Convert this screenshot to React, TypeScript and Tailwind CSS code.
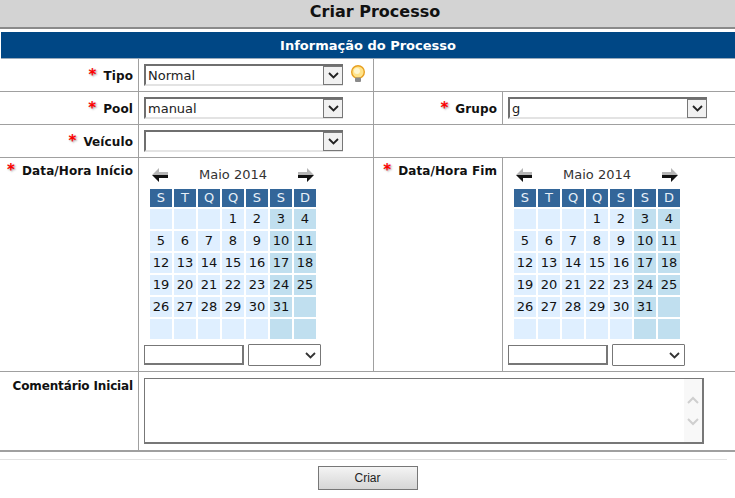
const font = "font-['DejaVu_Sans',Verdana,sans-serif]";

const HEADERS = ["S", "T", "Q", "Q", "S", "S", "D"];
const DAYS = [
  "", "", "", "1", "2", "3", "4",
  "5", "6", "7", "8", "9", "10", "11",
  "12", "13", "14", "15", "16", "17", "18",
  "19", "20", "21", "22", "23", "24", "25",
  "26", "27", "28", "29", "30", "31", "",
  "", "", "", "", "", "", "",
];

function Star() {
  return <span className="text-[#f00] text-[15px] leading-[14px] font-bold mr-[7px] [text-shadow:1px_1px_2px_#999]">*</span>;
}

function Label({ text, required = true }: { text: string; required?: boolean }) {
  return (
    <span className={`text-[12px] leading-[14px] font-bold text-[#111] whitespace-nowrap ${required ? "tracking-[0.1px]" : "tracking-[-0.15px]"}`}>
      {required && <Star />}
      {text}
    </span>
  );
}

function Chevron({ color = "#222" }: { color?: string }) {
  return (
    <svg width="11" height="7" viewBox="0 0 11 7" fill="none">
      <path d="M1 1l4.5 4.5L10 1" stroke={color} strokeWidth="1.8" />
    </svg>
  );
}

function Select({ value, width }: { value: string; width: string }) {
  return (
    <div className={`${width} h-[22px] flex items-center justify-between border-t-2 border-l-2 border-t-[#6f6f6f] border-l-[#6f6f6f] border-b-2 border-b-[#e3e3e3] pl-[2px] bg-white`}>
      <span className="text-[13px] text-[#222] leading-none">{value}</span>
      <div className="w-[20px] h-[19px] -mb-[1px] flex items-center justify-center border border-[#777] bg-[#f1f1f1]">
        <Chevron />
      </div>
    </div>
  );
}

function Arrow({ flip = false }: { flip?: boolean }) {
  return (
    <svg width="18" height="16" viewBox="0 0 18 16" className={flip ? "-scale-x-100" : ""}>
      <path d="M1 8L8 1v4h9v3H1z" fill="#b5b5b5" />
      <path d="M1 8h16v3H8v4z" fill="#111" />
    </svg>
  );
}

function Calendar() {
  return (
    <div className="flex flex-col">
      <div className="ml-[6px] w-[166px] h-[24px] mt-[5px] mb-[1px] flex items-center justify-between pl-[1px] pr-[1px]">
        <Arrow />
        <span className="text-[13px] text-[#333]">Maio 2014</span>
        <Arrow flip />
      </div>
      <div className="ml-[6px] mt-[1px] grid grid-cols-[repeat(7,22px)] gap-x-[2px]">
        {HEADERS.map((h, i) => (
          <div key={i} className="h-[18px] bg-[#336699] text-[#e8f0f8] text-[13px] leading-[18px] text-center">
            {h}
          </div>
        ))}
      </div>
      <div className="ml-[6px] mt-[2px] grid grid-cols-[repeat(7,22px)] gap-x-[2px] gap-y-[2px]">
        {DAYS.map((d, i) => (
          <div
            key={i}
            className={`h-[20px] text-[13px] leading-[20px] text-center text-[#111] ${i % 7 >= 5 ? "bg-[#c0dfef]" : "bg-[#dfefff]"}`}
          >
            {d}
          </div>
        ))}
      </div>
      <div className="mt-[5px] flex items-center gap-[4px]">
        <div className="w-[100px] h-[20px] border border-[#777] border-b-2 border-r-2 bg-white" />
        <div className="w-[73px] h-[22px] border border-[#777] rounded-[1px] bg-white flex items-center justify-end pr-[4px]">
          <Chevron color="#333" />
        </div>
      </div>
    </div>
  );
}

function Row({ height, left, mid, right, farRight }: {
  height: string;
  left: React.ReactNode;
  mid: React.ReactNode;
  right?: React.ReactNode;
  farRight?: React.ReactNode;
}) {
  return (
    <div className={`flex ${height} border-b border-[#a0a0a0]`}>
      <div className="w-[139px] shrink-0 border-r border-[#a0a0a0] pr-[5px] text-right">{left}</div>
      <div className="w-[235px] shrink-0 border-r border-[#a0a0a0] pl-[5px]">{mid}</div>
      {right ? (
        <>
          <div className="w-[129px] shrink-0 border-r border-[#a0a0a0] pr-[5px] text-right">{right}</div>
          <div className="flex-1 pl-[5px]">{farRight}</div>
        </>
      ) : (
        <div className="flex-1" />
      )}
    </div>
  );
}

export default function App() {
  return (
    <div className={`${font} w-[735px] h-[498px] bg-white overflow-hidden`}>
      <div className="h-[29px] bg-[#d3d3d3] border-b-2 border-[#8a8a8a] pl-[15px] text-center text-[16px] font-bold leading-[24px] text-[#111]">
        Criar Processo
      </div>
      <div className="mt-[3px] ml-[1px] h-[27px] bg-[#004785] border-b border-[#9ab] text-center text-[13px] font-bold leading-[27px] text-white">
        Informação do Processo
      </div>

      <Row
        height="h-[33px]"
        left={<div className="pt-[4px]"><Label text="Tipo" /></div>}
        mid={
          <div className="pt-[5px] flex items-start gap-[7px] w-[233px]">
            <Select value="Normal" width="w-[199px] shrink-0" />
            <svg width="16" height="18" viewBox="0 0 16 18" className="mt-[1px]">
              <circle cx="8" cy="7" r="6.3" fill="#ffe38a" stroke="#e8a020" strokeWidth="1.4" />
              <circle cx="7" cy="6" r="3" fill="#fff6cf" />
              <rect x="5" y="12.5" width="6" height="4.5" rx="1" fill="#8a8a8a" />
            </svg>
          </div>
        }
      />
      <Row
        height="h-[33px]"
        left={<div className="pt-[4px]"><Label text="Pool" /></div>}
        mid={<div className="pt-[5px]"><Select value="manual" width="w-[199px]" /></div>}
        right={<div className="pt-[4px]"><Label text="Grupo" /></div>}
        farRight={<div className="pt-[5px]"><Select value="g" width="w-[199px]" /></div>}
      />
      <Row
        height="h-[33px]"
        left={<div className="pt-[4px]"><Label text="Veículo" /></div>}
        mid={<div className="pt-[5px]"><Select value="" width="w-[199px]" /></div>}
      />
      <Row
        height="h-[214px]"
        left={<Label text="Data/Hora Início" />}
        mid={<Calendar />}
        right={<Label text="Data/Hora Fim" />}
        farRight={<Calendar />}
      />

      <div className="flex h-[80px] border-b-2 border-[#a0a0a0]">
        <div className="w-[139px] shrink-0 border-r border-[#a0a0a0] pr-[5px] pt-[1px] text-right">
          <Label text="Comentário Inicial" required={false} />
        </div>
        <div className="pl-[5px] pt-[6px]">
          <div className="w-[560px] h-[66px] border border-[#777] border-b-2 border-r-2 bg-white flex justify-end">
            <div className="w-[18px] bg-[#f8f8f8] flex flex-col items-center justify-center gap-[14px]">
              <svg width="12" height="8" viewBox="0 0 12 8" fill="none">
                <path d="M1 7l5-5 5 5" stroke="#cfcfcf" strokeWidth="2" />
              </svg>
              <svg width="12" height="8" viewBox="0 0 12 8" fill="none">
                <path d="M1 1l5 5 5-5" stroke="#cfcfcf" strokeWidth="2" />
              </svg>
            </div>
          </div>
        </div>
      </div>

      <div className="mt-[7px] w-[727px] border-b border-[#e3e3e3]" />
      <div className="mt-[6px] flex justify-center">
        <button className="w-[100px] h-[24px] border border-[#777] bg-gradient-to-b from-[#f4f4f4] to-[#d6d6d6] font-['Liberation_Sans',Arial,sans-serif] text-[12px] text-[#222]">
          Criar
        </button>
      </div>
    </div>
  );
}
